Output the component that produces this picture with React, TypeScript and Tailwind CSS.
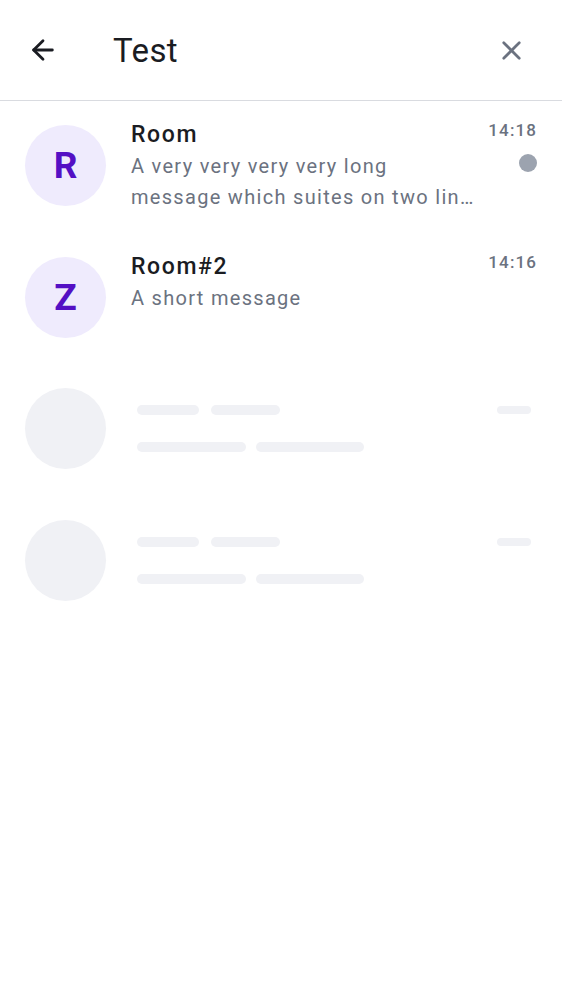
import { ArrowLeft, X } from "lucide-react";

type Room = {
  name: string;
  initial: string;
  lines: string[];
  time: string;
  unread?: boolean;
};

const rooms: Room[] = [
  {
    name: "Room",
    initial: "R",
    lines: ["A very very very very long", "message which suites on two lines"],
    time: "14:18",
    unread: true,
  },
  {
    name: "Room#2",
    initial: "Z",
    lines: ["A short message"],
    time: "14:16",
  },
];

function RoomRow({ room }: { room: Room }) {
  return (
    <div className="flex flex-row items-start h-[131.5px] px-[25px] pt-[24px]">
      <div className="w-[81px] h-[81px] shrink-0 rounded-full bg-[#efebfd] flex items-center justify-center">
        <span className="text-[37px] font-bold text-[#5410c4] leading-none">
          {room.initial}
        </span>
      </div>
      <div className="flex-1 min-w-0 ml-[25px] -mt-[6px]">
        <div className="text-[23px] leading-[32px] tracking-[1.6px] text-[#1a1c22] font-medium">
          {room.name}
        </div>
        {room.lines.map((line) => (
          <div
            key={line}
            className="text-[20px] leading-[31px] tracking-[1.3px] text-[#6b7280] truncate"
          >
            {line}
          </div>
        ))}
      </div>
      <div className="flex flex-col items-end w-[62px] shrink-0 -mt-[10px]">
        <span className="text-[17px] leading-[30px] tracking-[1.1px] font-medium text-[#6b7280]">
          {room.time}
        </span>
        {room.unread && (
          <span className="mt-[9px] w-[18px] h-[18px] rounded-full bg-[#9ca3af]" />
        )}
      </div>
    </div>
  );
}

function SkeletonRow() {
  return (
    <div className="flex flex-row items-start h-[131.5px] px-[25px] pt-[24px]">
      <div className="w-[81px] h-[81px] shrink-0 rounded-full bg-[#f0f1f5]" />
      <div className="flex-1 ml-[31px] pt-[17px] flex flex-col gap-[27px]">
        <div className="flex flex-row gap-[12px]">
          <div className="w-[62px] h-[10px] rounded-full bg-[#f0f1f5]" />
          <div className="w-[69px] h-[10px] rounded-full bg-[#f0f1f5]" />
        </div>
        <div className="flex flex-row gap-[10px]">
          <div className="w-[109px] h-[10px] rounded-full bg-[#f0f1f5]" />
          <div className="w-[108px] h-[10px] rounded-full bg-[#f0f1f5]" />
        </div>
      </div>
      <div className="pt-[18px] pr-[6px]">
        <div className="w-[34px] h-[8px] rounded-full bg-[#f0f1f5]" />
      </div>
    </div>
  );
}

export default function App() {
  return (
    <div
      className="w-[562px] h-[1000px] bg-white"
      style={{ fontFamily: "Roboto, 'Noto Sans', sans-serif" }}
    >
      <header className="h-[101px] flex flex-row items-center border-b border-[#d9dbe0] px-[27px]">
        <ArrowLeft className="w-[32px] h-[32px] text-[#1a1c22]" strokeWidth={2.1} />
        <h1 className="ml-[54px] flex-1 text-[33px] tracking-[0.4px] text-[#1a1c22] leading-none">
          Test
        </h1>
        <X className="w-[31px] h-[31px] text-[#6b7280] mr-[8px]" strokeWidth={2.1} />
      </header>
      <div className="flex flex-col">
        {rooms.map((r) => (
          <RoomRow key={r.name} room={r} />
        ))}
        <SkeletonRow />
        <SkeletonRow />
      </div>
    </div>
  );
}
